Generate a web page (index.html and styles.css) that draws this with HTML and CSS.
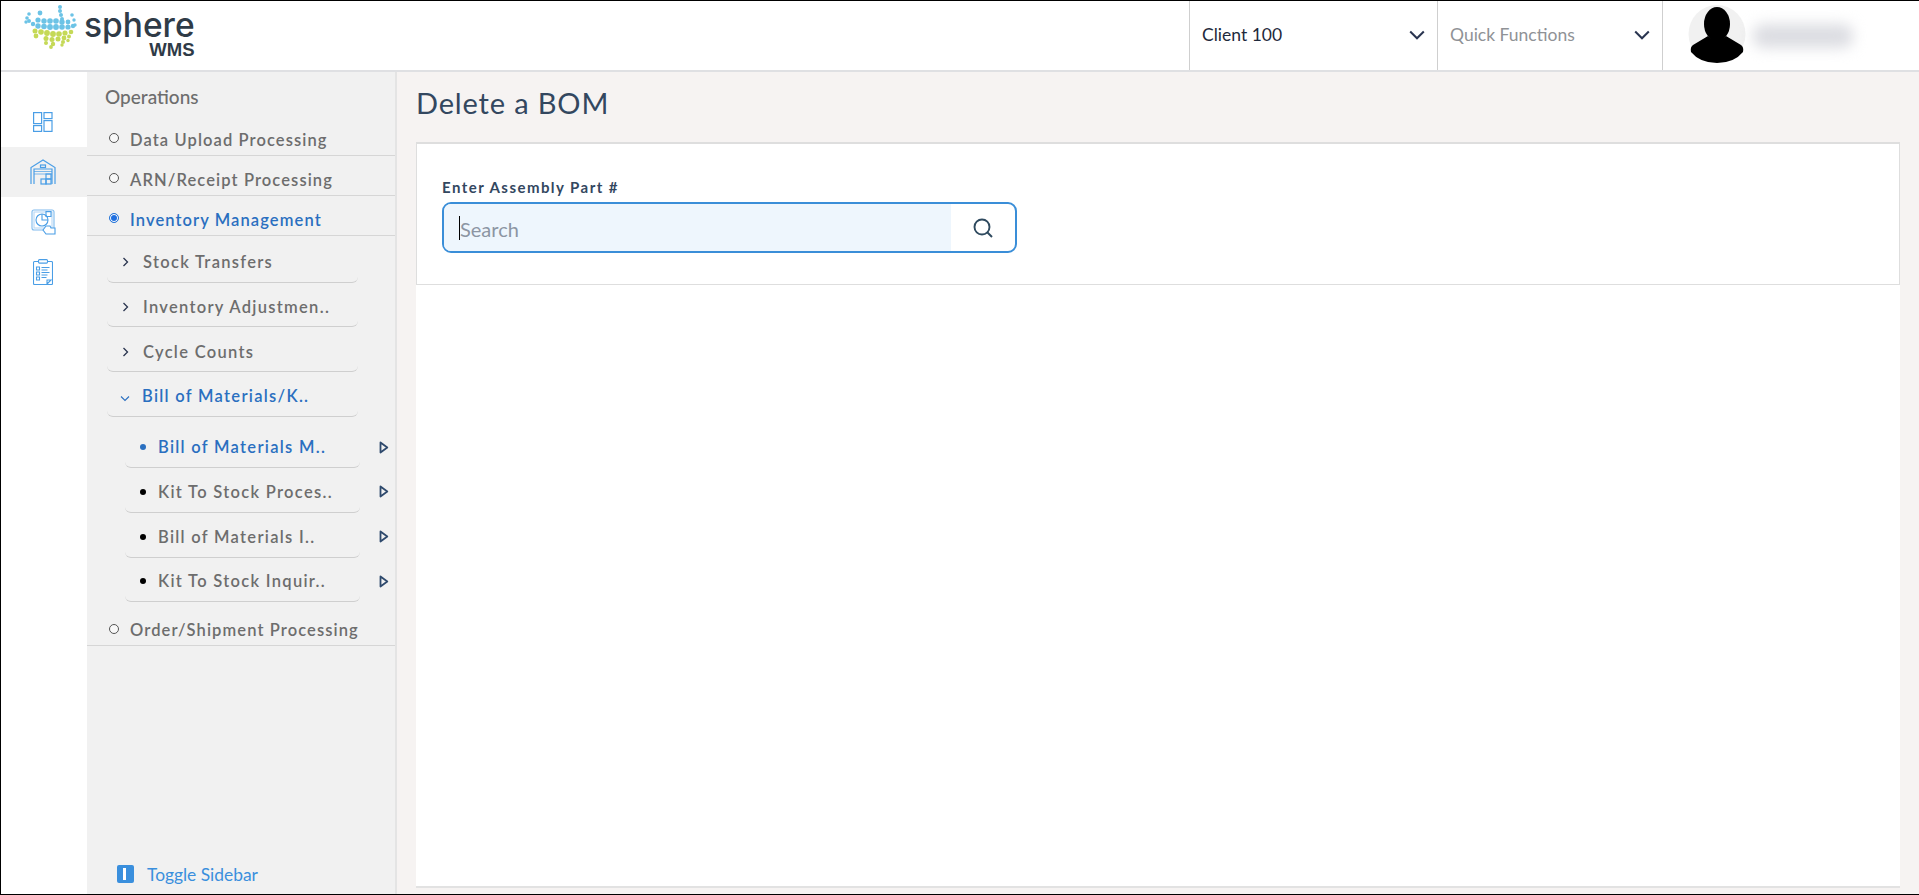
FILE: index.html
```html
<!DOCTYPE html>
<html lang="en">
<head>
<meta charset="utf-8">
<title>Delete a BOM</title>
<link rel="stylesheet" href="styles.css">
</head>
<body>
<div class="app">
  <header class="topbar">
    <a class="logo">
      <svg class="logo-mark" width="60" height="52" viewBox="20 2 60 52">
        <g fill="#6cc3e6">
          <circle cx="59" cy="7" r="2"/><circle cx="59" cy="11" r="2"/><circle cx="60" cy="15" r="2"/><circle cx="61" cy="19" r="2"/>
          <circle cx="39" cy="13" r="2.4"/><circle cx="28" cy="14" r="1.8"/><circle cx="26" cy="18" r="1.8"/><circle cx="25" cy="22" r="1.7"/><circle cx="71" cy="15" r="1.8"/><circle cx="73" cy="20" r="1.7"/><circle cx="74" cy="25" r="1.7"/>
          <circle cx="37" cy="20" r="2.6"/><circle cx="43" cy="21" r="2.7"/><circle cx="49" cy="21" r="2.8"/><circle cx="55" cy="21" r="2.8"/><circle cx="61" cy="22" r="2.7"/><circle cx="67" cy="22" r="2.4"/>
          <circle cx="28" cy="21" r="2"/><circle cx="32" cy="24" r="2.2"/><circle cx="37" cy="26" r="2.7"/><circle cx="43" cy="26.500" r="2.800"/><circle cx="49" cy="27" r="2.900"/><circle cx="55" cy="27" r="2.900"/><circle cx="61" cy="27" r="2.800"/><circle cx="67" cy="27" r="2.600"/><circle cx="72" cy="26" r="2.200"/>
        </g>
        <g fill="#c5d957">
          <circle cx="34" cy="31" r="2.500"/><circle cx="40" cy="32" r="2.800"/><circle cx="46" cy="33" r="2.900"/><circle cx="52" cy="34" r="2.900"/><circle cx="58" cy="34" r="2.800"/><circle cx="64" cy="33" r="2.600"/><circle cx="70" cy="32" r="2.300"/>
          <circle cx="35" cy="36" r="2.400"/><circle cx="45" cy="38.500" r="2.500"/><circle cx="51" cy="39.500" r="2.500"/><circle cx="57" cy="39" r="2.500"/><circle cx="63" cy="38" r="2.400"/><circle cx="68" cy="36.500" r="2"/>
          <circle cx="45" cy="43" r="2"/><circle cx="52" cy="44" r="2.200"/><circle cx="62" cy="42" r="2"/><circle cx="67" cy="40.500" r="1.700"/>
          <circle cx="50" cy="47" r="1.900"/><circle cx="61" cy="45" r="1.700"/>
        </g>
      </svg>
      <span class="logo-text">
        <span class="logo-name">sphere</span>
        <span class="logo-sub">WMS</span>
      </span>
    </a>
    <div class="top-spacer"></div>
    <div class="top-select top-select-client">
      <span class="top-value">Client 100</span>
      <svg class="top-chevron" width="16" height="10" viewBox="0 0 16 10"><path d="M1.200 1.500l6.800 6.800 6.800-6.800" fill="none" stroke="#2a3550" stroke-width="2"/></svg>
    </div>
    <div class="top-select top-select-quick">
      <span class="top-placeholder">Quick Functions</span>
      <svg class="top-chevron" width="16" height="10" viewBox="0 0 16 10"><path d="M1.200 1.500l6.800 6.800 6.800-6.800" fill="none" stroke="#2a3550" stroke-width="2"/></svg>
    </div>
    <div class="top-user">
      <svg class="avatar" width="58" height="58" viewBox="0 0 58 58">
        <ellipse cx="29" cy="29" rx="28.500" ry="29" fill="#f1f1f1"/>
        <ellipse cx="29" cy="19" rx="13" ry="17" fill="#000"/>
        <path d="M20 31 L5 40 Q2 42 3 47 Q12 58 29 58 Q46 58 55 47 Q56 42 53 40 L38 31 Q29 39 20 31Z" fill="#000"/>
      </svg>
      <span class="user-blur"></span>
    </div>
  </header>

  <div class="body-row">
    <nav class="rail">
      <a class="rail-item">
        <svg width="20" height="20" viewBox="0 0 20 20" fill="none" stroke="#4a9ee6" stroke-width="1.200"><rect x=".6" y=".6" width="8" height="11"/><rect x="11" y=".6" width="8" height="6"/><rect x=".6" y="13.600" width="8" height="5.800"/><rect x="11" y="8.600" width="8" height="10.800"/></svg>
      </a>
      <a class="rail-item rail-item-active">
        <svg width="26" height="26" viewBox="0 0 26 26" fill="none" stroke="#4a9ee6" stroke-width="1.200"><path d="M1 25V8.500L13 1l12 7.500V25"/><path d="M4 25V10h18v15"/><path d="M4 12.500h18M4 15h18" stroke-opacity=".7"/><rect x="10.500" y="6" width="5" height="2.500"/><rect x="11" y="20" width="5" height="5"/><rect x="16" y="20" width="5" height="5"/><rect x="16" y="15" width="5" height="5"/></svg>
      </a>
      <a class="rail-item">
        <svg width="25" height="26" viewBox="0 0 25 26" fill="none" stroke="#4a9ee6" stroke-width="1.100"><rect x="1" y="1" width="22" height="20" rx="2" stroke-opacity=".7"/><rect x="3" y="3" width="18" height="16" stroke-opacity=".4"/><circle cx="11" cy="11" r="6"/><path d="M11 5v6h6"/><path d="M15 2.500h5v5h-5z"/><path d="M12 21l3-4h4l1 2h4v6H15z" fill="#fff"/></svg>
      </a>
      <a class="rail-item">
        <svg width="20" height="26" viewBox="0 0 20 26" fill="none" stroke="#4a9ee6" stroke-width="1.100"><path d="M5.500 2.500H1.500a1 1 0 0 0-1 1V24.500a1 1 0 0 0 1 1h17a1 1 0 0 0 1-1V3.500a1 1 0 0 0-1-1h-4"/><rect x="5.500" y=".6" width="9" height="3.500" rx="1"/><path d="M3.500 8h3v3h-3zM3.500 13h3v3h-3zM3.500 18h3v3h-3zM8.500 8.500h8M8.500 11h6M8.500 13.500h8M8.500 16h6M8.500 18.500h5"/><path d="M14 25l4-4h-4z"/></svg>
      </a>
    </nav>

    <aside class="sidebar">
      <h2 class="side-title">Operations</h2>
      <ul class="menu">
        <li class="menu-row"><span class="ring"></span><span class="menu-text">Data Upload Processing</span></li>
        <li class="menu-row"><span class="ring"></span><span class="menu-text">ARN/Receipt Processing</span></li>
        <li class="menu-row menu-row-active"><span class="ring ring-active"></span><span class="menu-text">Inventory Management</span></li>
      </ul>
      <ul class="submenu">
        <li class="sub-row"><svg class="sub-chev" width="7" height="10" viewBox="0 0 7 10"><path d="M1.500 1l4 4-4 4" fill="none" stroke="#2a3550" stroke-width="1.300"/></svg><span>Stock Transfers</span></li>
        <li class="sub-row"><svg class="sub-chev" width="7" height="10" viewBox="0 0 7 10"><path d="M1.500 1l4 4-4 4" fill="none" stroke="#2a3550" stroke-width="1.300"/></svg><span>Inventory Adjustmen..</span></li>
        <li class="sub-row"><svg class="sub-chev" width="7" height="10" viewBox="0 0 7 10"><path d="M1.500 1l4 4-4 4" fill="none" stroke="#2a3550" stroke-width="1.300"/></svg><span>Cycle Counts</span></li>
        <li class="sub-row sub-row-active"><svg class="sub-chev-open" width="10" height="7" viewBox="0 0 10 7"><path d="M1 1.500l4 4 4-4" fill="none" stroke="#2a6fc0" stroke-width="1.100"/></svg><span>Bill of Materials/K..</span></li>
      </ul>
      <ul class="leafmenu">
        <li class="leaf-row leaf-row-active"><span class="bullet"></span><span class="leaf-text">Bill of Materials M..</span><svg class="leaf-arrow" width="10" height="13" viewBox="0 0 10 13"><path d="M1.500 1.500l6.800 5-6.800 5z" fill="none" stroke="#2f4a6d" stroke-width="1.800" stroke-linejoin="round"/></svg></li>
        <li class="leaf-row"><span class="bullet"></span><span class="leaf-text">Kit To Stock Proces..</span><svg class="leaf-arrow" width="10" height="13" viewBox="0 0 10 13"><path d="M1.500 1.500l6.800 5-6.800 5z" fill="none" stroke="#2f4a6d" stroke-width="1.800" stroke-linejoin="round"/></svg></li>
        <li class="leaf-row"><span class="bullet"></span><span class="leaf-text">Bill of Materials I..</span><svg class="leaf-arrow" width="10" height="13" viewBox="0 0 10 13"><path d="M1.500 1.500l6.800 5-6.800 5z" fill="none" stroke="#2f4a6d" stroke-width="1.800" stroke-linejoin="round"/></svg></li>
        <li class="leaf-row"><span class="bullet"></span><span class="leaf-text">Kit To Stock Inquir..</span><svg class="leaf-arrow" width="10" height="13" viewBox="0 0 10 13"><path d="M1.500 1.500l6.800 5-6.800 5z" fill="none" stroke="#2f4a6d" stroke-width="1.800" stroke-linejoin="round"/></svg></li>
      </ul>
      <ul class="menu menu-last">
        <li class="menu-row"><span class="ring"></span><span class="menu-text">Order/Shipment Processing</span></li>
      </ul>
      <a class="toggle"><span class="toggle-icon"></span><span>Toggle Sidebar</span></a>
    </aside>

    <main class="main">
      <h1 class="page-title">Delete a BOM</h1>
      <section class="sheet">
        <div class="card">
          <label class="field-label" for="part">Enter Assembly Part #</label>
          <div class="search">
            <span class="caret"></span>
            <input class="search-input" id="part" type="text" placeholder="Search">
            <span class="search-btn">
              <svg width="22" height="22" viewBox="0 0 22 22" fill="none" stroke="#2f4a5f" stroke-width="1.900"><circle cx="10" cy="10" r="7.500"/><path d="M15.500 15.500l4.500 4.500"/></svg>
            </span>
          </div>
        </div>
      </section>
    </main>
  </div>
</div>
</body>
</html>
```
FILE: styles.css
```css
* { box-sizing: border-box; }
html, body { margin: 0; padding: 0; }
body { font-family: Lato, "Liberation Sans", sans-serif; background: #fff; }
ul { list-style: none; margin: 0; padding: 0; }

.app {
  width: 1919px;
  height: 895px;
  border: 1px solid #000;
  border-width: 1px 0 1px 1px;
  display: flex;
  flex-direction: column;
  overflow: hidden;
}

/* top bar */
.topbar {
  height: 71px;
  flex: none;
  display: flex;
  align-items: stretch;
  background: #fff;
  border-bottom: 2px solid #dfe0e3;
}
.logo {
  display: flex;
  align-items: flex-start;
  padding: 1px 0 0 20px;
}
.logo-text {
  display: flex;
  flex-direction: column;
  align-items: flex-end;
  margin-left: 3px;
  color: #2f3b47;
}
.logo-name {
  font-family: Inter, sans-serif;
  font-weight: 500;
  font-size: 33.500px;
  line-height: 30px;
  margin-top: 8px;
}
.logo-sub {
  font-family: "Liberation Sans", sans-serif;
  font-weight: 700;
  font-size: 18.500px;
  line-height: 16px;
  margin-top: 2px;
}
.top-spacer { flex: 1; }
.top-select {
  display: flex;
  align-items: center;
  justify-content: space-between;
  border-left: 1px solid #cfcfcf;
  font-size: 17.500px;
  padding-bottom: 2px;
}
.top-select-client { width: 248px; padding-right: 12px; padding-left: 12px; }
.top-select-quick { width: 225px; padding-right: 12px; padding-left: 12px; }
.top-value { color: #1f2a3c; }
.top-placeholder { color: #8f9296; }
.top-user {
  width: 257px;
  display: flex;
  align-items: center;
  border-left: 1px solid #cfcfcf;
  padding: 0 0 3px 25px;
}
.user-blur {
  width: 100px;
  height: 24px;
  margin-left: 7px;
  margin-top: 3px;
  border-radius: 10px;
  background: #dcdde2;
  filter: blur(7px);
}

/* rail */
.body-row { flex: 1; display: flex; min-height: 0; }
.rail {
  width: 86px;
  flex: none;
  padding-top: 25px;
  display: flex;
  flex-direction: column;
  background: #fff;
}
.rail-item {
  height: 50px;
  display: flex;
  align-items: center;
  justify-content: center;
  padding-right: 2px;
}
.rail-item-active { background: #f1f1f1; }

/* sidebar */
.sidebar {
  width: 310px;
  flex: none;
  background: #f1f1f1;
  border-right: 2px solid #e4e4e4;
  display: flex;
  flex-direction: column;
  color: #6d6d6d;
}
.side-title {
  margin: 0;
  padding: 13px 0 0 18px;
  height: 44px;
  font-size: 19px;
  line-height: 24px;
  font-weight: 500;
  color: #6d6d6d;
}
.menu-row {
  height: 40px;
  display: flex;
  align-items: center;
  padding: 8px 0 0 22px;
  border-bottom: 1px solid #d6d6d6;
  font-size: 16.500px;
  font-weight: 600;
  letter-spacing: 1.100px;
}
.menu-text { margin-left: 12px; }
.ring {
  width: 10px;
  height: 10px;
  border-radius: 50%;
  border: 1.500px solid #555;
  background: #f8f8f8;
  margin: -3px -1px 0 0;
}
.ring-active {
  border-color: #2a78d8;
  background: #1f6fe0;
  box-shadow: inset 0 0 0 1px #fff;
}
.menu-row-active { color: #2a6fc0; }

.submenu { padding: 2px 0 0 20px; }
.sub-row {
  width: 251px;
  height: 44.670px;
  display: flex;
  align-items: center;
  padding: 5px 0 0 15px;
  border-bottom: 1px solid #cfcfcf;
  border-radius: 0 0 6px 6px;
  font-size: 16.500px;
  font-weight: 600;
  letter-spacing: 1.300px;
}
.sub-chev { margin-right: 14px; }
.sub-chev-open { margin-right: 12px; margin-left: -2px; margin-top: 4px; }
.sub-row-active { color: #2a6fc0; }

.leafmenu { padding: 7px 0 0 38px; }
.leaf-row {
  width: 235px;
  height: 44.670px;
  display: flex;
  align-items: center;
  padding: 4px 0 0 15px;
  border-bottom: 1px solid #cfcfcf;
  border-radius: 0 0 6px 6px;
  font-size: 16.500px;
  font-weight: 600;
  letter-spacing: 1.300px;
  position: relative;
}
.bullet {
  width: 6px;
  height: 6px;
  border-radius: 50%;
  background: #000;
  margin-right: 12px;
}
.leaf-row-active { color: #2a6fc0; }
.leaf-row-active .bullet { background: #2a6fc0; }
.leaf-arrow { position: absolute; right: -29px; top: 17px; }

.menu-last .menu-row { height: 44px; padding-top: 13px; }

.toggle {
  margin-top: auto;
  height: 28px;
  margin-bottom: 6px;
  display: flex;
  align-items: center;
  padding-left: 30px;
  font-size: 17.400px;
  color: #3a8fdd;
}
.toggle-icon {
  width: 17px;
  height: 18px;
  border-radius: 2px;
  background: #3a8fdd;
  margin-right: 13px;
  display: flex;
  align-items: center;
  justify-content: center;
}
.toggle-icon::before {
  content: "";
  width: 3px;
  height: 12px;
  background: #fff;
  margin-right: 3px;
}

/* main */
.main {
  flex: 1;
  min-width: 0;
  background: #f6f3f2;
  padding: 0 19px 6px 19px;
  display: flex;
  flex-direction: column;
}
.page-title {
  margin: 0;
  height: 70px;
  padding-top: 12px;
  font-size: 29px;
  line-height: 38px;
  font-weight: 400;
  letter-spacing: .85px;
  color: #33475f;
}
.sheet {
  flex: 1;
  background: #fff;
  border-bottom: 2px solid #e2e2e2;
}
.card {
  height: 143px;
  border: 1px solid #dedede;
  border-top-width: 2px;
  padding: 34px 0 0 25px;
}
.field-label {
  display: block;
  font-size: 15px;
  line-height: 18px;
  font-weight: 700;
  letter-spacing: 1.450px;
  color: #33475f;
  margin-bottom: 6px;
}
.search {
  position: relative;
  width: 575px;
  height: 51px;
  display: flex;
  border: 2px solid #3a8ed8;
  border-radius: 9px;
  background: #fff;
  overflow: hidden;
}
.search-input {
  flex: 1;
  min-width: 0;
  border: 0;
  outline: 0;
  padding: 2px 16px 0;
  background: #eef6fd;
  font: 400 20px Lato, sans-serif;
  color: #33475f;
}
.search-input::placeholder { color: #8c95a3; opacity: 1; }
.caret {
  position: absolute;
  left: 15px;
  top: 12px;
  width: 1px;
  height: 24px;
  background: #000;
}
.search-btn {
  width: 64px;
  flex: none;
  display: flex;
  align-items: center;
  justify-content: center;
}
```
